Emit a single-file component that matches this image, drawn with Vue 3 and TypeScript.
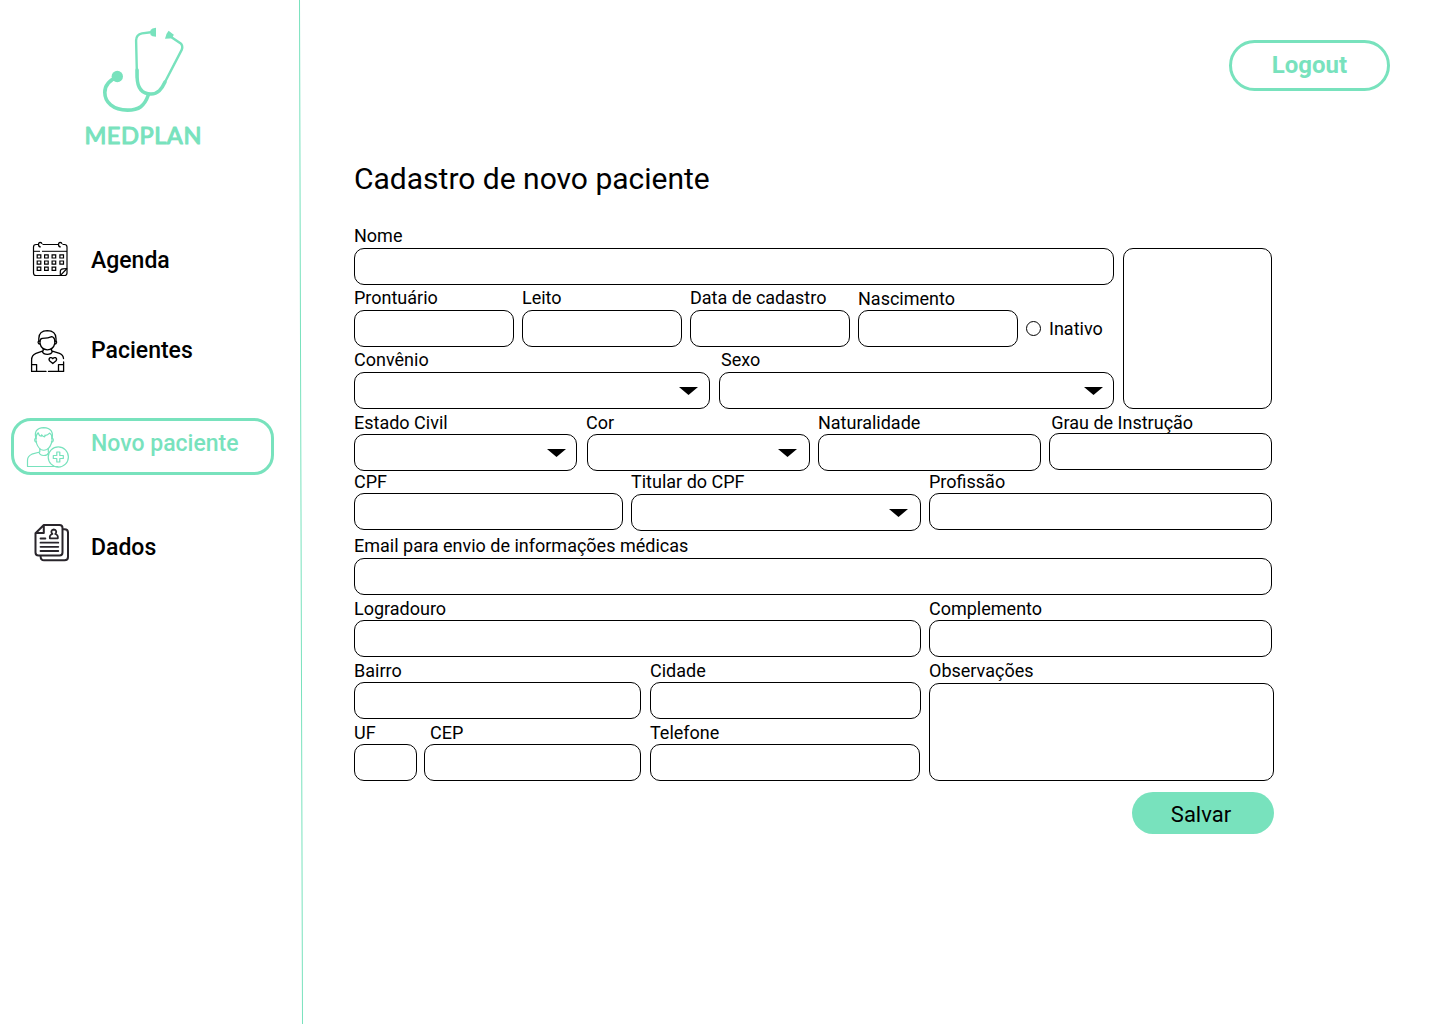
<script setup lang="ts">
import { reactive, ref } from 'vue'

interface Field {
  label: string
  width: number
  // distance between this field and the previous one
  before?: number
  // space between the label and its box
  gap?: number
  // horizontal nudge of the label
  indent?: number
  drop?: number
  // right inset of the arrow; marks the field as a dropdown
  arrow?: number
}

interface Row {
  height: number
  fields: Field[]
  radio?: boolean
}

const topRows: Row[] = [
  { height: 62, fields: [{ label: 'Nome', width: 760, gap: 2 }] },
  {
    height: 62,
    radio: true,
    fields: [
      { label: 'Prontuário', width: 160, gap: 2 },
      { label: 'Leito', width: 160, before: 8, gap: 2 },
      { label: 'Data de cadastro', width: 160, before: 8, gap: 2 },
      { label: 'Nascimento', width: 160, before: 8, gap: 1, drop: 1 },
    ],
  },
  {
    height: 63,
    fields: [
      { label: 'Convênio', width: 356, gap: 2, arrow: 12 },
      { label: 'Sexo', width: 395, before: 9, gap: 2, indent: 2, arrow: 11 },
    ],
  },
]

const middleRows: Row[] = [
  {
    height: 59,
    fields: [
      { label: 'Estado Civil', width: 222.7, gap: 1, arrow: 10.7 },
      { label: 'Cor', width: 222.7, before: 10.3, gap: 1, indent: -1, arrow: 12.7 },
      { label: 'Naturalidade', width: 222.7, before: 8.3, gap: 1 },
      { label: 'Grau de Instrução', width: 222.7, before: 8.6, gap: 0, indent: 2 },
    ],
  },
  {
    height: 64,
    fields: [
      { label: 'CPF', width: 269, gap: 1 },
      { label: 'Titular do CPF', width: 290, before: 8, gap: 2, arrow: 13 },
      { label: 'Profissão', width: 343, before: 8, gap: 1 },
    ],
  },
  { height: 63, fields: [{ label: 'Email para envio de informações médicas', width: 918, gap: 2 }] },
  {
    height: 62,
    fields: [
      { label: 'Logradouro', width: 567, gap: 1 },
      { label: 'Complemento', width: 343, before: 8, gap: 1 },
    ],
  },
]

const bottomRows: Row[] = [
  {
    height: 62,
    fields: [
      { label: 'Bairro', width: 287, gap: 1 },
      { label: 'Cidade', width: 271, before: 9, gap: 1 },
    ],
  },
  {
    height: 58,
    fields: [
      { label: 'UF', width: 63, gap: 1 },
      { label: 'CEP', width: 217, before: 7, gap: 1, indent: 6 },
      { label: 'Telefone', width: 270, before: 9, gap: 1 },
    ],
  },
]

const groups = [
  { name: 'top', rows: topRows },
  { name: 'middle', rows: middleRows },
  { name: 'bottom', rows: bottomRows },
]

const values = reactive<Record<string, string>>({})
const notes = ref('')
const inactive = ref(false)
</script>

<template>
  <div class="page">
    <aside class="sidebar">
      <svg class="logo" width="130" height="136" viewBox="0 0 130 136" fill="none" stroke="#78e2bd">
        <g stroke-linecap="round" stroke-linejoin="round">
          <path d="M73 12.3L64 13.4Q58.2 14.4 58.1 20.5L59 58" stroke-width="2.4" />
          <path d="M92 16.2L102.4 23.2Q105.2 25.6 103.8 29.6L86.5 63" stroke-width="2.4" />
          <path d="M59.1 50V57C59.4 69 65 74 73 74C80 74 83.5 69.5 87 62" stroke-width="3.5" />
          <path d="M70.3 75C66.5 86 61 90.1 49.5 90.1C35 90.1 26.8 82 26.8 72.5C26.8 64.5 31.5 60.3 39 57.2" stroke-width="3.6" />
        </g>
        <g fill="#78e2bd" stroke="none">
          <path d="M72.5 10Q73.8 8.4 78 7.8V16.8Q73.8 16.5 72.5 15Z" />
          <path d="M87 18.8Q88 13.5 90.6 10.8L95.8 14.7Q94.6 18.2 91.8 18.5Z" />
          <circle cx="39.3" cy="56.5" r="5.7" />
        </g>
        <text x="6.4" y="123.9" textLength="117" lengthAdjust="spacing" class="brand">MEDPLAN</text>
      </svg>

      <nav class="menu">
        <a class="item agenda">
          <svg class="icon" width="40" height="40" viewBox="0 0 40 40" fill="none" stroke="#000" stroke-width="1.2">
            <path d="M9.7 4.5H7Q4.5 4.5 4.5 7V33Q4.5 35.5 7 35.5H31.5L38 28.5V7Q38 4.5 35.5 4.5H33.5M13.5 4.5H30" />
            <path d="M4.5 11.3H11M13 11.3H38" stroke-width="1" />
            <path d="M38 28.5V33Q38 35.5 35.5 35.5H31M31.3 35V31.5Q31.3 29 34 28.8L38 28.5" />
            <path d="M13 4Q12.8 2.3 11.2 2.3Q9.5 2.4 9.5 4.6Q9.6 6.9 11.8 7M33 4Q32.8 2.3 31.2 2.3Q29.5 2.4 29.5 4.6Q29.6 6.9 31.8 7" />
            <path d="M8.2 14.8H11.8V18H8.2ZM15.6 14.8H19.2V18H15.6ZM23.1 14.8H26.7V18H23.1ZM30.9 14.8H34.5V18H30.9ZM8.2 21H11.8V24.2H8.2ZM15.6 21H19.2V24.2H15.6ZM23.1 21H26.7V24.2H23.1ZM30.9 21H34.5V24.2H30.9ZM8.2 27.2H11.8V30.4H8.2ZM15.6 27.2H19.2V30.4H15.6ZM23.1 27.2H26.7V30.4H23.1Z" />
          </svg>
          <span>Agenda</span>
        </a>
        <a class="item patients">
          <svg class="icon" width="40" height="44" viewBox="0 0 40 44" fill="none" stroke="#000" stroke-width="1.3" stroke-linecap="round" stroke-linejoin="round">
            <path d="M10.8 12.5V9.5Q11 1.8 19.3 1.7Q27.8 1.8 28 9.5V12.5" />
            <path d="M12 12.3Q12 9.7 14.4 9.4Q20.5 9.4 23.8 7.7Q26.8 8.6 26.8 12.3V14.5Q25.3 20.7 19.3 20.8Q13.4 20.4 12 14.5Z" />
            <path d="M12 12.2Q10 11.7 10.1 13.4Q10.3 15.2 12.3 15.1M26.8 12.2Q28.7 11.7 28.6 13.4Q28.3 15.2 26.5 15.1" />
            <path d="M15.2 19.8V21.8L8 24.3Q3.6 26 3.6 31V42.4H18M23.5 19.8V21.8L31.5 24.3Q35.2 25.7 35.5 29.5M35.6 33V42.4H20.5" />
            <path d="M14.2 22.3Q15.2 25.4 19.3 25.4Q23.5 25.4 24.5 22.3M3.8 35.6H8.6V42.2M35.4 35.6H30.5V42.2" />
            <path d="M24.8 34.5L21.5 31.7Q20.4 29.8 22 28.7Q23.7 28.1 24.8 29.7Q26 28.1 27.7 28.7Q29.3 29.8 28.1 31.7Z" />
          </svg>
          <span>Pacientes</span>
        </a>
        <a class="item new-patient active">
          <svg class="icon" width="44" height="42" viewBox="0 0 44 42" fill="none" stroke="#78e2bd" stroke-width="1.2" stroke-linecap="round" stroke-linejoin="round">
            <path d="M10 12.5Q7 2.3 17.7 1.6Q28.3 2.2 26 12.5" />
            <path d="M10 12Q10.4 8 12.3 6.8Q13.3 10.4 15.4 10.2L15.6 8.8Q16.8 10.8 18.6 10.9Q19.3 10.3 18.8 9.2Q21.2 9.7 23.6 7.1Q26 8.8 26 12V15Q24.6 21.5 20.8 23.5Q17.7 25 14.8 23.5Q11.2 21 10 15Z" />
            <path d="M10 12.2Q8.2 12.7 8.9 15Q9.5 16.4 10.6 15.8M26 12.2Q27.8 12.7 27.1 15Q26.5 16.4 25.4 15.8" />
            <path d="M13.8 23V26L5.8 28.2Q1.5 30 1.5 34.5V40.5H32M22.3 22.8V25.5M13 26Q13.5 29.5 18 29.5Q21.7 29.4 22.7 26.5" />
            <circle cx="32.3" cy="31" r="10.1" />
            <path d="M30.8 26H33.8V29.5H37.3V32.5H33.8V36H30.8V32.5H27.3V29.5H30.8Z" />
          </svg>
          <span>Novo paciente</span>
        </a>
        <a class="item data">
          <svg class="icon" width="40" height="40" viewBox="0 0 40 40" fill="none" stroke="#29252b" stroke-width="2" stroke-linecap="round" stroke-linejoin="round">
            <path d="M14.5 2H29.5Q32.5 2 32.5 5V29.5Q32.5 32.5 29.5 32.5H8.5Q5.5 32.5 5.5 29.5V10.2L13.8 2V10H6" />
            <path d="M33.5 6.2H34.5Q38 6.2 38 9.5V34Q38 37.3 34.5 37.3H14Q10.7 37.3 10.6 33.5" />
            <path d="M19.9 15.3Q19.2 11.9 22.4 11Q21.2 9.8 21.4 8.3Q21.9 6.6 23.8 6.5Q25.7 6.6 26.2 8.3Q26.5 9.8 25.3 11Q28.4 11.9 27.8 15.3Z" stroke-width="1.8" />
            <path d="M10.5 15.5H15.4M10.5 19.7H28.3M10.5 23.8H28.3M10.5 28H28.3" stroke-width="1.8" />
          </svg>
          <span>Dados</span>
        </a>
      </nav>
    </aside>

    <svg class="divider" width="5" height="1024" viewBox="0 0 5 1024">
      <path d="M1.5 0L4.5 1024" stroke="#78e2bd" stroke-width="1" />
    </svg>

    <main class="content">
      <header class="topbar">
        <button class="logout" type="button">Logout</button>
      </header>
      <h1>Cadastro de novo paciente</h1>

      <form class="form" @submit.prevent>
        <div v-for="group in groups" :key="group.name" class="group">
          <div class="rows">
            <div v-for="(row, i) in group.rows" :key="i" class="row" :style="{ height: row.height + 'px' }">
              <label
                v-for="field in row.fields"
                :key="field.label"
                class="field"
                :style="{ width: field.width + 'px', marginLeft: (field.before ?? 0) + 'px', paddingTop: (field.drop ?? 0) + 'px' }"
              >
                <span class="label" :style="{ marginBottom: field.gap + 'px', textIndent: (field.indent ?? 0) + 'px' }">{{ field.label }}</span>
                <span v-if="field.arrow" class="box select" :style="{ paddingRight: field.arrow - 1 + 'px' }">
                  <svg width="19" height="8" viewBox="0 0 19 8"><path d="M0 0H19L9.5 8Z" /></svg>
                </span>
                <input v-else v-model="values[field.label]" class="box" type="text" />
              </label>
              <label v-if="row.radio" class="status">
                <input v-model="inactive" type="radio" :value="true" />
                <span>Inativo</span>
              </label>
            </div>
          </div>
          <div v-if="group.name === 'top'" class="photo"></div>
          <label v-if="group.name === 'bottom'" class="field notes">
            <span class="label">Observações</span>
            <textarea v-model="notes" class="box"></textarea>
          </label>
        </div>
        <button class="save" type="submit">Salvar</button>
      </form>
    </main>
  </div>
</template>

<style>
body {
  background: #fff;
}
</style>

<style scoped>
.page {
  display: flex;
  width: 1440px;
  height: 1024px;
  overflow: hidden;
  font-family: Roboto, sans-serif;
  color: #000;
}

.sidebar {
  flex: none;
  width: 298px;
}

.divider {
  flex: none;
  display: block;
}

.logo {
  display: block;
  margin: 20px 0 0 78px;
  overflow: visible;
}

.brand {
  font: 400 23.6px Lato, sans-serif;
  fill: #78e2bd;
  stroke: #78e2bd;
  stroke-width: 1.1;
  stroke-linejoin: round;
}

.menu {
  display: flex;
  flex-direction: column;
  padding: 72px 0 0 10px;
}

.item {
  box-sizing: border-box;
  display: flex;
  align-items: center;
  width: 264px;
  height: 57px;
  font-size: 23px;
  font-weight: 500;
  line-height: 28px;
}

.item span {
  margin-left: auto;
  width: 183px;
  white-space: nowrap;
}

.agenda {
  margin-top: 4px;
}

.agenda .icon {
  margin: 0 0 2px 18.7px;
}

.patients {
  margin-top: 33px;
}

.patients .icon {
  margin-left: 18px;
}

.new-patient {
  margin-top: 39px;
}

.active {
  width: 263px;
  margin-left: 0.6px;
  border: 3px solid #78e2bd;
  border-radius: 20px;
  color: #78e2bd;
}

.active .icon {
  margin-left: 12.6px;
}

.active span {
  width: 179.6px;
  padding-bottom: 5px;
}

.data {
  margin-top: 44px;
}

.data .icon {
  margin-left: 20px;
  margin-bottom: 10px;
}

.content {
  flex: 1;
  padding-left: 51px;
}

.topbar {
  display: flex;
  justify-content: flex-end;
  padding: 40px 50px 0 0;
}

.logout {
  box-sizing: border-box;
  width: 161px;
  height: 51px;
  padding: 0 0 2px;
  border: 3px solid #78e2bd;
  border-radius: 26px;
  background: none;
  font: 700 24px/28px Roboto, sans-serif;
  color: #78e2bd;
}

h1 {
  margin: 70px 0 0;
  font-size: 30px;
  font-weight: 400;
  line-height: 36px;
}

.form {
  width: 920px;
  margin-top: 29px;
}

.group,
.row {
  display: flex;
  align-items: flex-start;
}

.field {
  box-sizing: border-box;
  flex: none;
  display: flex;
  flex-direction: column;
}

.label,
.status {
  font-size: 18px;
  line-height: 20px;
  white-space: nowrap;
}

.box {
  box-sizing: border-box;
  display: block;
  width: 100%;
  height: 37px;
  margin: 0;
  padding: 0 10px;
  border: 1px solid #000;
  border-radius: 10px;
  outline: 0;
  background: none;
  font: 18px Roboto, sans-serif;
}

.select {
  display: flex;
  justify-content: flex-end;
  align-items: center;
}

.status {
  display: flex;
  align-items: center;
  gap: 8px;
  margin: 31px 0 0 8px;
}

.status input {
  appearance: none;
  box-sizing: border-box;
  width: 15px;
  height: 15px;
  margin: 0 0 1px;
  border: 1px solid #000;
  border-radius: 50%;
}

.photo {
  box-sizing: border-box;
  width: 149px;
  height: 161px;
  margin: 22px 0 0 9px;
  border: 1px solid #000;
  border-radius: 10px;
}

.notes {
  width: 345px;
  margin-left: 8px;
}

.notes .box {
  height: 98px;
  margin-top: 2px;
  resize: none;
}

.save {
  display: block;
  width: 142px;
  height: 42px;
  margin: 11.4px 0 0 auto;
  padding: 3px 4px 0 0;
  border: 0;
  border-radius: 21px;
  background: #78e2bd;
  font: 400 22px/26px Roboto, sans-serif;
  color: #000;
}
</style>
